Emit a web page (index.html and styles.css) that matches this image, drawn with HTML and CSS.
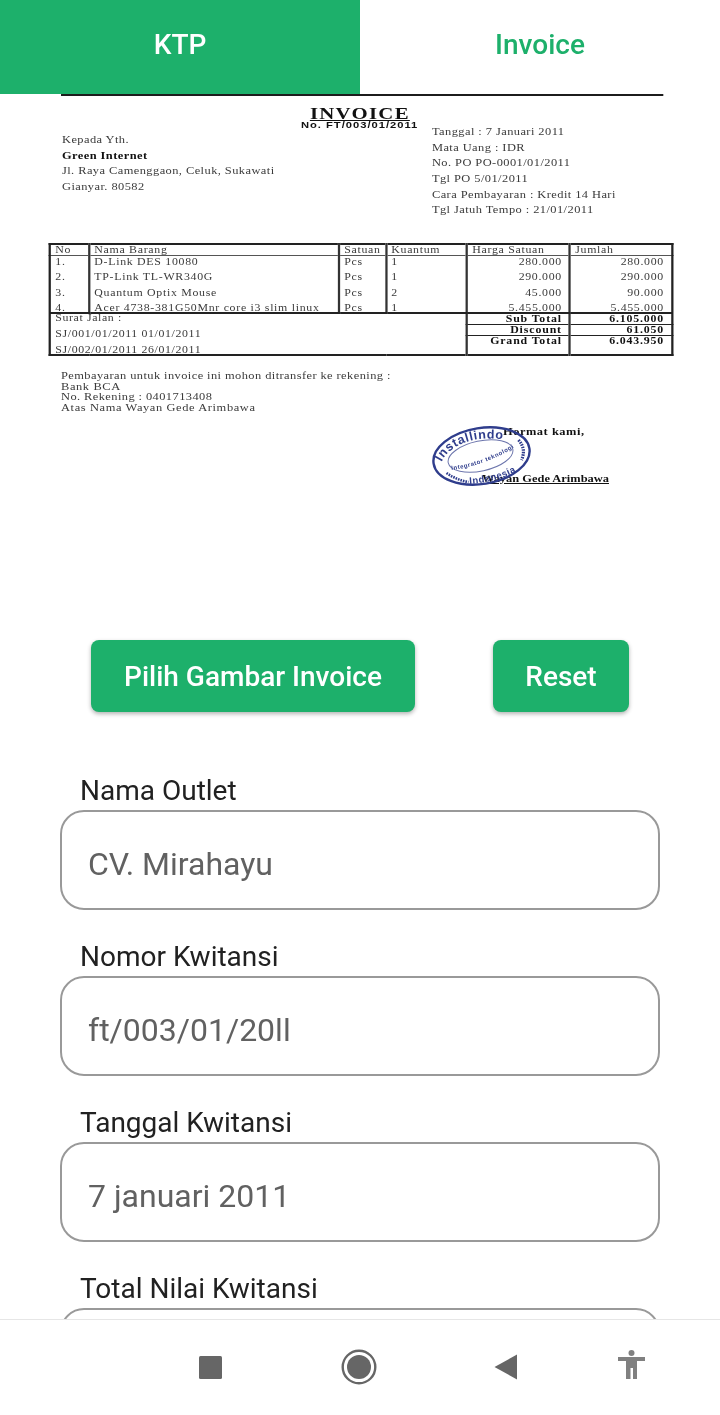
FILE: index.html
```html
<!DOCTYPE html>
<html lang="id">
<head>
<meta charset="utf-8">
<title>Invoice</title>
<link rel="stylesheet" href="styles.css">
</head>
<body>
<div class="screen">
  <div class="content">
    <div class="tabs">
      <div class="tab tab-off">KTP</div>
      <div class="tab tab-on">Invoice</div>
    </div>

    <div class="doc">
      <div class="doc-inner">
        <div class="doc-rule"></div>
        <div class="doc-title"><span class="title-text">INVOICE</span></div>
        <div class="doc-no"><span class="no-text">No. FT/003/01/2011</span></div>
        <div class="doc-head">
          <div class="doc-to">
            <div class="ln">Kepada Yth.</div>
            <div class="ln ln-b">Green Internet</div>
            <div class="ln">Jl. Raya Camenggaon, Celuk, Sukawati</div>
            <div class="ln">Gianyar. 80582</div>
          </div>
          <div class="doc-meta">
            <div class="ln">Tanggal : 7 Januari 2011</div>
            <div class="ln">Mata Uang : IDR</div>
            <div class="ln">No. PO PO-0001/01/2011</div>
            <div class="ln">Tgl PO 5/01/2011</div>
            <div class="ln">Cara Pembayaran : Kredit 14 Hari</div>
            <div class="ln">Tgl Jatuh Tempo : 21/01/2011</div>
          </div>
        </div>

        <table class="inv">
          <colgroup>
            <col class="c1"><col class="c2"><col class="c3"><col class="c4"><col class="c5"><col class="c6">
          </colgroup>
          <tr class="r-head">
            <td class="vb">No</td><td class="vb">Nama Barang</td><td class="vb">Satuan</td><td class="vb">Kuantum</td><td class="vb">Harga Satuan</td><td>Jumlah</td>
          </tr>
          <tr class="r-item">
            <td class="vb">1.</td><td class="vb">D-Link DES 10080</td><td class="vb">Pcs</td><td class="vb">1</td><td class="vb num">280.000</td><td class="num">280.000</td>
          </tr>
          <tr class="r-item">
            <td class="vb">2.</td><td class="vb">TP-Link TL-WR340G</td><td class="vb">Pcs</td><td class="vb">1</td><td class="vb num">290.000</td><td class="num">290.000</td>
          </tr>
          <tr class="r-item">
            <td class="vb">3.</td><td class="vb">Quantum Optix Mouse</td><td class="vb">Pcs</td><td class="vb">2</td><td class="vb num">45.000</td><td class="num">90.000</td>
          </tr>
          <tr class="r-item r-last">
            <td class="vb">4.</td><td class="vb">Acer 4738-381G50Mnr core i3 slim linux</td><td class="vb">Pcs</td><td class="vb">1</td><td class="vb num">5.455.000</td><td class="num">5.455.000</td>
          </tr>
          <tr class="r-sum1">
            <td class="sj" colspan="4" rowspan="3">
              <div class="sj-ln sj-top">Surat Jalan :</div>
              <div class="sj-ln">SJ/001/01/2011 01/01/2011</div>
              <div class="sj-ln sj-end">SJ/002/01/2011 26/01/2011</div>
            </td>
            <td class="vb num lbl hb">Sub Total</td><td class="num b hb">6.105.000</td>
          </tr>
          <tr class="r-sum2">
            <td class="vb num lbl hb">Discount</td><td class="num b hb">61.050</td>
          </tr>
          <tr class="r-grand">
            <td class="vb num lbl">Grand Total</td><td class="num b">6.043.950</td>
          </tr>
        </table>

        <div class="doc-pay">
          <div class="pay-tight">Pembayaran untuk invoice ini mohon ditransfer ke rekening :</div>
          <div>Bank BCA</div>
          <div class="pay-tight">No. Rekening : 0401713408</div>
          <div>Atas Nama Wayan Gede Arimbawa</div>
        </div>

        <div class="doc-sign">
          <div class="sign-a">Hormat kami,</div>
          <div class="sign-b">Wayan Gede Arimbawa</div>
          <svg class="stamp" viewBox="0 0 104 68" width="92" height="68" preserveAspectRatio="none" aria-hidden="true">
            <g fill="none" stroke="#2f3d8c">
              <ellipse cx="51" cy="33" rx="48.5" ry="28" stroke-width="2.4" transform="rotate(-9 51 33)"/>
              <ellipse cx="50" cy="33" rx="33" ry="15" stroke-width="1" stroke="#6d76ad" transform="rotate(-12 50 33)"/>
              <path d="M88 17 Q96 26 91 37" stroke-width="3.2" stroke-dasharray="1.6 1"/>
              <path d="M16 50 Q26 57 38 59" stroke-width="2.6" stroke-dasharray="1.6 1"/>
              <path id="arcTop" d="M11 39 C18 24 40 11 76 17" stroke="none"/>
              <path id="arcIn" d="M21 47 Q55 43 86 23" stroke="none"/>
              <path id="arcBot" d="M39 61 Q68 59 88 47" stroke="none"/>
            </g>
            <text class="st-a"><textPath href="#arcTop">Installindo</textPath></text>
            <text class="st-b"><textPath href="#arcIn">Integrator teknologi</textPath></text>
            <text class="st-c"><textPath href="#arcBot">Indonesia</textPath></text>
          </svg>
        </div>
      </div>
    </div>

    <div class="actions">
      <button class="btn btn-pick">Pilih Gambar Invoice</button>
      <button class="btn btn-reset">Reset</button>
    </div>

    <form class="form">
      <div class="field">
        <div class="field-label">Nama Outlet</div>
        <div class="field-box">CV. Mirahayu</div>
      </div>
      <div class="field">
        <div class="field-label">Nomor Kwitansi</div>
        <div class="field-box">ft/003/01/20ll</div>
      </div>
      <div class="field">
        <div class="field-label">Tanggal Kwitansi</div>
        <div class="field-box">7 januari 2011</div>
      </div>
      <div class="field">
        <div class="field-label">Total Nilai Kwitansi</div>
        <div class="field-box"></div>
      </div>
    </form>
  </div>

  <nav class="navbar">
    <svg class="nav-square" width="24" height="24" viewBox="0 0 24 24" aria-hidden="true">
      <rect x="1" y="1" width="23" height="23" rx="1.5" fill="#666"/>
    </svg>
    <svg class="nav-home" width="36" height="36" viewBox="0 0 36 36" aria-hidden="true">
      <circle cx="18" cy="18" r="16.3" fill="none" stroke="#666" stroke-width="2.4"/>
      <circle cx="18" cy="18" r="12" fill="#666"/>
    </svg>
    <svg class="nav-back" width="24" height="26" viewBox="0 0 24 26" aria-hidden="true">
      <path d="M0.5 13 L23 0.5 V25.5 Z" fill="#666"/>
    </svg>
    <svg class="nav-access" width="28" height="34" viewBox="0 0 28 34" aria-hidden="true">
      <circle cx="13.5" cy="3" r="3" fill="#808080"/>
      <path d="M0 7 H27 V11 H19 V29 H15 V18 H12.5 V29 H8 V11 H0 Z" fill="#808080"/>
    </svg>
  </nav>
</div>
</body>
</html>
```

FILE: styles.css
```css
* { box-sizing: border-box; }
html, body { margin: 0; padding: 0; background: #fff; }
body { font-family: Roboto, "Noto Sans", sans-serif; }

.screen {
  width: 720px;
  height: 1415px;
  display: flex;
  flex-direction: column;
  overflow: hidden;
}
.content { flex: 1 1 auto; min-height: 0; overflow: hidden; will-change: transform; }

/* Tabs */
.tabs { display: flex; height: 94px; }
.tab {
  flex: 1 1 50%;
  display: flex;
  align-items: center;
  justify-content: center;
  padding-bottom: 6px;
  font-size: 28px;
  font-weight: 500;
}
.tab-off { background: #1db06b; color: #fff; }
.tab-on { background: #fff; color: #1db06b; }

/* Scanned invoice: the scan is stretched horizontally, so its inner sheet is too */
.doc {
  height: 546px;
  filter: blur(0.35px);
  overflow: hidden;
}
.doc-inner {
  width: 637.17px;
  height: 546px;
  padding-left: 42.48px;
  transform: scaleX(1.13);
  transform-origin: 0 0;
  font-family: "Liberation Serif", serif;
  color: #3a3a3a;
  font-size: 11px;
  line-height: 16px;
  letter-spacing: 0.38px;
}
.doc-rule { width: 532.7px; height: 2px; margin-left: 11.5px; background: #1c1c1c; }
.doc-title {
  width: 552.2px;
  margin-top: 10px;
  text-align: center;
  font-size: 16px;
  line-height: 16px;
  font-weight: 700;
  letter-spacing: 1px;
  color: #111;
}
.title-text {
  display: inline-block;
  text-decoration: underline;
  transform: scaleX(1.15);
}
.doc-no {
  width: 552.2px;
  margin-top: -3px;
  text-align: center;
  font-family: "Liberation Sans", sans-serif;
  font-size: 9px;
  line-height: 12px;
  font-weight: 700;
  letter-spacing: 0.8px;
  color: #111;
}
.no-text { display: inline-block; transform: scaleX(1.1); }
.doc-head { display: flex; height: 124px; padding-left: 12.39px; margin-top: -12px; }
.doc-to { width: 327.4px; padding-top: 12px; }
.doc-meta { padding-top: 4px; }
.ln { height: 15.7px; white-space: nowrap; }
.ln-b { font-weight: 700; color: #111; }

.inv {
  width: 550.4px;
  margin-left: 0.88px;
  table-layout: fixed;
  border-collapse: collapse;
  border: 2px solid #222;
  font-size: 10.5px;
  line-height: 10px;
  letter-spacing: 0.62px;
}
.c1 { width: 34.5px; } .c2 { width: 221.2px; } .c3 { width: 41.6px; }
.c4 { width: 71.7px; } .c5 { width: 91.15px; } .c6 { width: 90.25px; }
.inv td { padding: 0 4.4px 0 3.6px; vertical-align: top; white-space: nowrap; overflow: hidden; }
.r-head td { height: 11px; border-bottom: 1px solid #555; }
.r-item td { height: 15.6px; padding-top: 1px; }
.inv .r-last td { height: 10px; padding-top: 2px; line-height: 8px; border-bottom: 2px solid #222; }
.inv td.vb { border-right: 2px solid #333; }
.inv td.num { text-align: right; padding-right: 6.2px; letter-spacing: 0.59px; }
.inv td.b { font-weight: 700; color: #111; letter-spacing: 0.7px; }
.inv td.lbl { font-weight: 700; color: #111; letter-spacing: 0.76px; }
.inv td.hb { border-bottom: 1px solid #222; }
.r-sum1 td { height: 9px; line-height: 9px; }
.r-sum2 td { height: 10px; line-height: 9px; }
.r-grand td { height: 19px; line-height: 9px; }
.inv td.sj { padding: 0 0 0 3.6px; border-right: 2px solid #333; letter-spacing: 0.54px; line-height: 16px; }
.sj-ln { height: 16px; line-height: 16px; }
.sj-top { height: 8px; line-height: 7px; margin-bottom: 4px; }
.sj-end { height: 12px; }

.doc-pay {
  padding: 14px 0 0 11.5px;
  line-height: 10.6px;
  letter-spacing: 0.54px;
}
.pay-tight { letter-spacing: 0.37px; }

.doc-sign { position: relative; height: 80px; margin-top: 13.8px; }
.sign-a, .sign-b {
  position: absolute;
  font-weight: 700;
  color: #111;
  white-space: nowrap;
}
.sign-a { left: 402.65px; top: -3px; letter-spacing: 0.47px; }
.sign-b { left: 384px; top: 44px; text-decoration: underline; letter-spacing: 0; }
.stamp { position: absolute; left: 338.9px; top: -3px; }
.st-a { font: 700 12.5px "Liberation Sans", sans-serif; fill: #2f3d8c; letter-spacing: 0.7px; }
.st-b { font: 700 6px "Liberation Sans", sans-serif; fill: #2f3d8c; letter-spacing: 0.55px; }
.st-c { font: 700 9.5px "Liberation Sans", sans-serif; fill: #2f3d8c; letter-spacing: 0.5px; }

/* Buttons */
.actions { display: flex; height: 72px; padding-left: 91px; gap: 78px; }
.btn {
  height: 72px;
  border: 0;
  border-radius: 8px;
  background: #1db06b;
  color: #fff;
  font: 500 28px Roboto, sans-serif;
  box-shadow: 0 2px 4px rgba(0, 0, 0, 0.3);
  padding: 0;
}
.btn-pick { width: 324px; }
.btn-reset { width: 136px; }

/* Form */
.form { padding: 61px 60px 0; }
.field { margin-bottom: 29px; }
.field-label {
  height: 37px;
  padding-left: 20px;
  font-size: 28px;
  line-height: 35px;
  color: #212121;
}
.field-box {
  height: 100px;
  border: 2px solid #999;
  border-radius: 24px;
  padding-left: 26px;
  font-size: 32px;
  line-height: 104px;
  color: #616161;
}

/* System nav */
.navbar {
  flex: 0 0 96px;
  display: flex;
  align-items: center;
  padding: 0 0 1px 198px;
  border-top: 1px solid #e6e6e6;
  background: #fff;
}
.nav-home { margin-left: 119px; }
.nav-back { margin-left: 117px; }
.nav-access { margin-left: 100px; }
```
